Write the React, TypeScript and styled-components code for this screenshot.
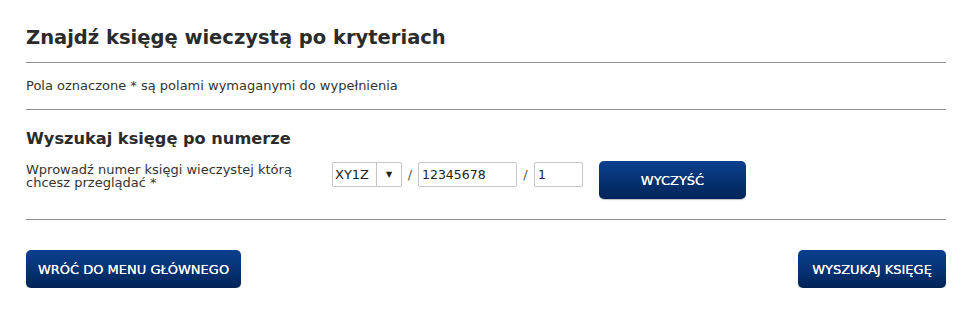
import React from "react";
import styled, { createGlobalStyle } from "styled-components";

const Global = createGlobalStyle`
  html, body { margin: 0; padding: 0; background: #fff; }
  body { font-family: "DejaVu Sans", Verdana, sans-serif; color: #333; }
`;

const Page = styled.div`
  width: 920px;
  margin-left: 26px;
  padding-top: 26px;
`;

const Title = styled.h1`
  margin: 0;
  font-size: 19.5px;
  line-height: 24px;
  font-weight: bold;
  color: #2b2b2b;
  padding-bottom: 12px;
  border-bottom: 1px solid #8e8e8e;
`;

const Note = styled.p`
  margin: 0;
  font-size: 13px;
  line-height: 16px;
  padding: 15px 0 15px;
  border-bottom: 1px solid #8e8e8e;
`;

const Section = styled.section`
  padding: 19px 0 20px;
  border-bottom: 1px solid #8e8e8e;
`;

const SectionTitle = styled.h2`
  margin: 0 0 13px;
  font-size: 16.2px;
  line-height: 20px;
  font-weight: bold;
  color: #2b2b2b;
`;

const Row = styled.div`
  display: flex;
  align-items: flex-start;
`;

const Label = styled.label`
  width: 306px;
  font-size: 13px;
  line-height: 13px;
  padding-top: 1px;
  padding-right: 10px;
  box-sizing: border-box;
`;

const Controls = styled.div`
  display: flex;
  align-items: flex-start;
`;

const FakeSelect = styled.div`
  display: flex;
  width: 70px;
  height: 25px;
  box-sizing: border-box;
  border: 1px solid #c6c6c6;
  border-radius: 2px;
  font-size: 13px;
  background: #fff;
`;

const SelectValue = styled.span`
  flex: 1;
  display: flex;
  align-items: center;
  padding-left: 2px;
  color: #222;
`;

const SelectArrow = styled.span`
  width: 24px;
  border-left: 1px solid #c6c6c6;
  display: flex;
  align-items: center;
  justify-content: center;
  font-size: 8px;
  color: #222;
`;

const Slash = styled.span<{ $w: number }>`
  font-size: 13px;
  line-height: 25px;
  color: #555;
  width: ${(p) => p.$w}px;
  text-align: center;
`;

const Input = styled.input<{ $w: number }>`
  width: ${(p) => p.$w}px;
  height: 25px;
  box-sizing: border-box;
  border: 1px solid #c6c6c6;
  border-radius: 2px;
  padding: 0 3px;
  font-family: "DejaVu Sans", Verdana, sans-serif;
  font-size: 12.5px;
  color: #222;
  outline: none;
`;

const Button = styled.button<{ $w: number; $ml?: number; $mt?: number }>`
  width: ${(p) => p.$w}px;
  height: 38px;
  margin-left: ${(p) => p.$ml ?? 0}px;
  margin-top: ${(p) => p.$mt ?? 0}px;
  border: none;
  border-radius: 5px;
  background: linear-gradient(to bottom, #0b3f8e 0%, #053272 55%, #002357 100%);
  box-shadow: 0 1px 1px rgba(0, 0, 0, 0.25);
  color: #fff;
  font-family: "DejaVu Sans", Verdana, sans-serif;
  font-size: 13px;
  font-weight: normal;
  text-shadow: 0 0 0.4px #fff;
  text-transform: uppercase;
  cursor: pointer;
  padding: 0;
`;

const Footer = styled.div`
  display: flex;
  justify-content: space-between;
  padding-top: 30px;
`;

export default function App() {
  return (
    <>
      <Global />
      <Page>
        <Title>Znajdź księgę wieczystą po kryteriach</Title>
        <Note>Pola oznaczone * są polami wymaganymi do wypełnienia</Note>
        <Section>
          <SectionTitle>Wyszukaj księgę po numerze</SectionTitle>
          <Row>
            <Label>Wprowadź numer księgi wieczystej którą chcesz przeglądać *</Label>
            <Controls>
              <FakeSelect>
                <SelectValue>XY1Z</SelectValue>
                <SelectArrow>▼</SelectArrow>
              </FakeSelect>
              <Slash $w={16}>/</Slash>
              <Input $w={99} defaultValue="12345678" />
              <Slash $w={17}>/</Slash>
              <Input $w={49} defaultValue="1" />
              <Button $w={147} $ml={16} $mt={-1}>Wyczyść</Button>
            </Controls>
          </Row>
        </Section>
        <Footer>
          <Button $w={215}>Wróć do menu głównego</Button>
          <Button $w={148}>Wyszukaj księgę</Button>
        </Footer>
      </Page>
    </>
  );
}
